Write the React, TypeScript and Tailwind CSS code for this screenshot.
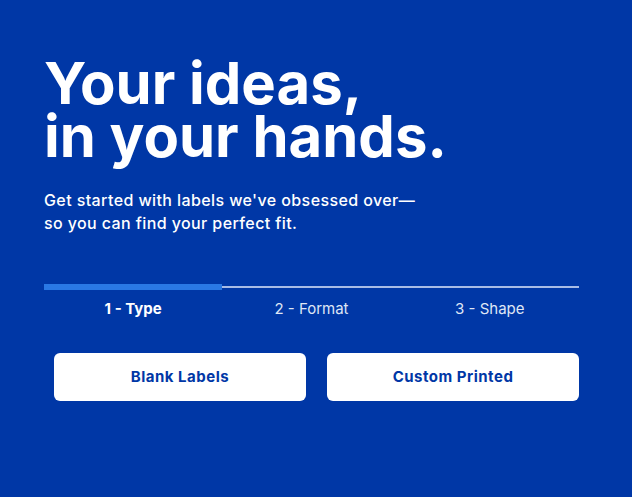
import React from "react";

export default function App() {
  return (
    <div
      className="w-[632px] h-[497px] bg-[#0037a6] text-white overflow-hidden"
      style={{ fontFamily: "Inter, 'Noto Sans', sans-serif" }}
    >
      <div className="pl-[44px] pt-[57px]">
        <h1 className="text-[58px] leading-[53px] font-bold tracking-[0px]">
          Your ideas,
          <br />
          in your hands.
        </h1>
        <p className="mt-[26px] text-[16px] leading-[23px] font-medium tracking-[0.4px]">
          Get started with labels we've obsessed over—
          <br />
          so you can find your perfect fit.
        </p>
        <div className="mt-[49px] w-[535px]">
          <div className="flex items-center h-[6px]">
            <div className="w-[178px] h-[6px] bg-[#2a78e4]" />
            <div className="flex-1 h-[2px] bg-[#a8bce6]" />
          </div>
          <div className="grid grid-cols-3 mt-[7px] text-[15px] leading-[24px] text-center">
            <div className="font-bold">1 - Type</div>
            <div className="text-[#dfe6f5]">2 - Format</div>
            <div className="text-[#dfe6f5]">3 - Shape</div>
          </div>
        </div>
        <div className="mt-[32px] ml-[10px] w-[525px] grid grid-cols-2 gap-[21px]">
          <button className="h-[48px] rounded-[6px] bg-white text-[#0037a6] text-[15px] font-bold tracking-[0.5px]">
            Blank Labels
          </button>
          <button className="h-[48px] rounded-[6px] bg-white text-[#0037a6] text-[15px] font-bold tracking-[0.5px]">
            Custom Printed
          </button>
        </div>
      </div>
    </div>
  );
}
